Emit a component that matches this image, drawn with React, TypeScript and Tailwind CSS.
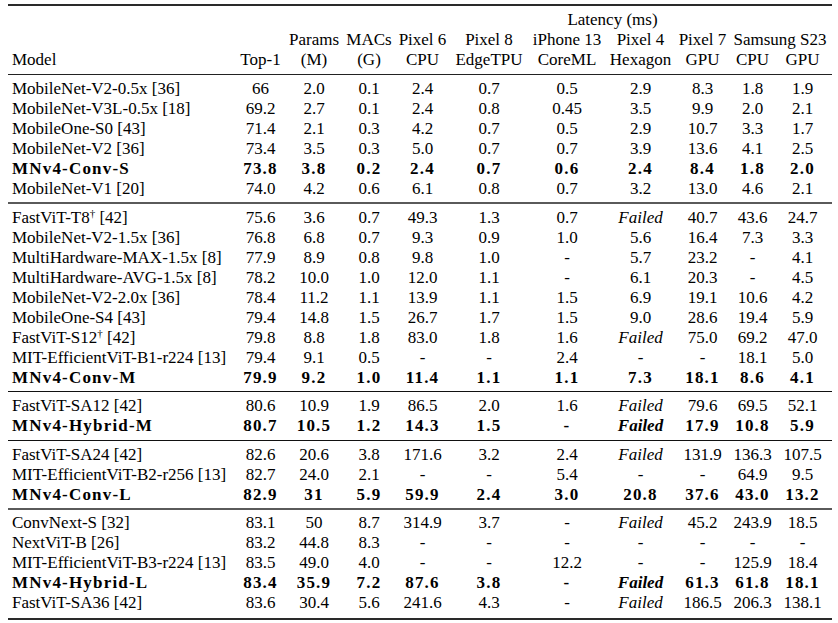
import React from "react";

type Row = { name: React.ReactNode; v: string[]; bold?: boolean };

const GRID =
  "grid grid-cols-[228px_49px_58px_52px_55px_78px_78px_69px_55px_45px_55px_2px]";

const Dag = ({ base }: { base: string }) => (
  <span>
    {base}
    <sup className="text-[11px]">†</sup> [42]
  </span>
);

const blocks: Row[][] = [
  [
    { name: "MobileNet-V2-0.5x [36]", v: ["66", "2.0", "0.1", "2.4", "0.7", "0.5", "2.9", "8.3", "1.8", "1.9"] },
    { name: "MobileNet-V3L-0.5x [18]", v: ["69.2", "2.7", "0.1", "2.4", "0.8", "0.45", "3.5", "9.9", "2.0", "2.1"] },
    { name: "MobileOne-S0 [43]", v: ["71.4", "2.1", "0.3", "4.2", "0.7", "0.5", "2.9", "10.7", "3.3", "1.7"] },
    { name: "MobileNet-V2 [36]", v: ["73.4", "3.5", "0.3", "5.0", "0.7", "0.7", "3.9", "13.6", "4.1", "2.5"] },
    { name: "MNv4-Conv-S", bold: true, v: ["73.8", "3.8", "0.2", "2.4", "0.7", "0.6", "2.4", "8.4", "1.8", "2.0"] },
    { name: "MobileNet-V1 [20]", v: ["74.0", "4.2", "0.6", "6.1", "0.8", "0.7", "3.2", "13.0", "4.6", "2.1"] },
  ],
  [
    { name: <Dag base="FastViT-T8" />, v: ["75.6", "3.6", "0.7", "49.3", "1.3", "0.7", "Failed", "40.7", "43.6", "24.7"] },
    { name: "MobileNet-V2-1.5x [36]", v: ["76.8", "6.8", "0.7", "9.3", "0.9", "1.0", "5.6", "16.4", "7.3", "3.3"] },
    { name: "MultiHardware-MAX-1.5x [8]", v: ["77.9", "8.9", "0.8", "9.8", "1.0", "-", "5.7", "23.2", "-", "4.1"] },
    { name: "MultiHardware-AVG-1.5x [8]", v: ["78.2", "10.0", "1.0", "12.0", "1.1", "-", "6.1", "20.3", "-", "4.5"] },
    { name: "MobileNet-V2-2.0x [36]", v: ["78.4", "11.2", "1.1", "13.9", "1.1", "1.5", "6.9", "19.1", "10.6", "4.2"] },
    { name: "MobileOne-S4 [43]", v: ["79.4", "14.8", "1.5", "26.7", "1.7", "1.5", "9.0", "28.6", "19.4", "5.9"] },
    { name: <Dag base="FastViT-S12" />, v: ["79.8", "8.8", "1.8", "83.0", "1.8", "1.6", "Failed", "75.0", "69.2", "47.0"] },
    { name: "MIT-EfficientViT-B1-r224 [13]", v: ["79.4", "9.1", "0.5", "-", "-", "2.4", "-", "-", "18.1", "5.0"] },
    { name: "MNv4-Conv-M", bold: true, v: ["79.9", "9.2", "1.0", "11.4", "1.1", "1.1", "7.3", "18.1", "8.6", "4.1"] },
  ],
  [
    { name: "FastViT-SA12 [42]", v: ["80.6", "10.9", "1.9", "86.5", "2.0", "1.6", "Failed", "79.6", "69.5", "52.1"] },
    { name: "MNv4-Hybrid-M", bold: true, v: ["80.7", "10.5", "1.2", "14.3", "1.5", "-", "Failed", "17.9", "10.8", "5.9"] },
  ],
  [
    { name: "FastViT-SA24 [42]", v: ["82.6", "20.6", "3.8", "171.6", "3.2", "2.4", "Failed", "131.9", "136.3", "107.5"] },
    { name: "MIT-EfficientViT-B2-r256 [13]", v: ["82.7", "24.0", "2.1", "-", "-", "5.4", "-", "-", "64.9", "9.5"] },
    { name: "MNv4-Conv-L", bold: true, v: ["82.9", "31", "5.9", "59.9", "2.4", "3.0", "20.8", "37.6", "43.0", "13.2"] },
  ],
  [
    { name: "ConvNext-S [32]", v: ["83.1", "50", "8.7", "314.9", "3.7", "-", "Failed", "45.2", "243.9", "18.5"] },
    { name: "NextViT-B [26]", v: ["83.2", "44.8", "8.3", "-", "-", "-", "-", "-", "-", "-"] },
    { name: "MIT-EfficientViT-B3-r224 [13]", v: ["83.5", "49.0", "4.0", "-", "-", "12.2", "-", "-", "125.9", "18.4"] },
    { name: "MNv4-Hybrid-L", bold: true, v: ["83.4", "35.9", "7.2", "87.6", "3.8", "-", "Failed", "61.3", "61.8", "18.1"] },
    { name: "FastViT-SA36 [42]", v: ["83.6", "30.4", "5.6", "241.6", "4.3", "-", "Failed", "186.5", "206.3", "138.1"] },
  ],
];

// separator styles after blocks 0..3
const seps = ["gray", "black", "black", "gray"];

function DataRow({ r }: { r: Row }) {
  const b = r.bold ? "font-bold tracking-[0.07em]" : "";
  return (
    <div className={`${GRID} h-[20px] leading-[20px]`}>
      <div className={`pl-[4px] whitespace-nowrap ${b}`}>{r.name}</div>
      {r.v.map((x, i) => (
        <div key={i} className={`flex justify-center whitespace-nowrap ${b}`}>
          {x === "Failed" ? <i className="tracking-normal">{x}</i> : x}
        </div>
      ))}
      <div />
    </div>
  );
}

export default function App() {
  return (
    <div className="w-[838px] h-[623px] bg-white overflow-hidden text-black font-['Liberation_Serif',serif] text-[17px]">
      <div className="ml-[8px] w-[824px] pt-[4px]">
        <div className="h-[2px] bg-[#2a2a2a]" />
        <div className="h-[4px]" />
        {/* header row 1 */}
        <div className={`${GRID} h-[20px] leading-[20px]`}>
          <div className="col-start-5 col-span-7 flex justify-center whitespace-nowrap">Latency (ms)</div>
        </div>
        {/* header row 2 */}
        <div className={`${GRID} h-[20px] leading-[20px]`}>
          <div />
          <div />
          <div className="flex justify-center whitespace-nowrap">Params</div>
          <div className="flex justify-center whitespace-nowrap">MACs</div>
          <div className="flex justify-center whitespace-nowrap">Pixel 6</div>
          <div className="flex justify-center whitespace-nowrap">Pixel 8</div>
          <div className="flex justify-center whitespace-nowrap">iPhone 13</div>
          <div className="flex justify-center whitespace-nowrap">Pixel 4</div>
          <div className="flex justify-center whitespace-nowrap">Pixel 7</div>
          <div className="col-span-2 flex justify-center whitespace-nowrap">Samsung S23</div>
          <div />
        </div>
        {/* header row 3 */}
        <div className={`${GRID} h-[20px] leading-[20px]`}>
          <div className="pl-[4px]">Model</div>
          {["Top-1", "(M)", "(G)", "CPU", "EdgeTPU", "CoreML", "Hexagon", "GPU", "CPU", "GPU"].map((h, i) => (
            <div key={i} className="flex justify-center whitespace-nowrap">
              {h}
            </div>
          ))}
          <div />
        </div>
        <div className="mt-[4px] h-[1px] bg-[#222]" />
        <div className="h-[4px]" />
        {blocks.map((blk, bi) => (
          <div key={bi}>
            {blk.map((r, ri) => (
              <DataRow key={ri} r={r} />
            ))}
            {bi < 4 &&
              (seps[bi] === "gray" ? (
                <div className="pt-[3.3px] pb-[3.3px]">
                  <div className="h-[2px] bg-[#5a5a5a]" />
                </div>
              ) : (
                <div className="pt-[3.8px] pb-[3.8px]">
                  <div className="h-[1px] bg-[#111]" />
                </div>
              ))}
          </div>
        ))}
        <div className="mt-[4.6px] h-[2px] bg-[#2a2a2a]" />
      </div>
    </div>
  );
}
